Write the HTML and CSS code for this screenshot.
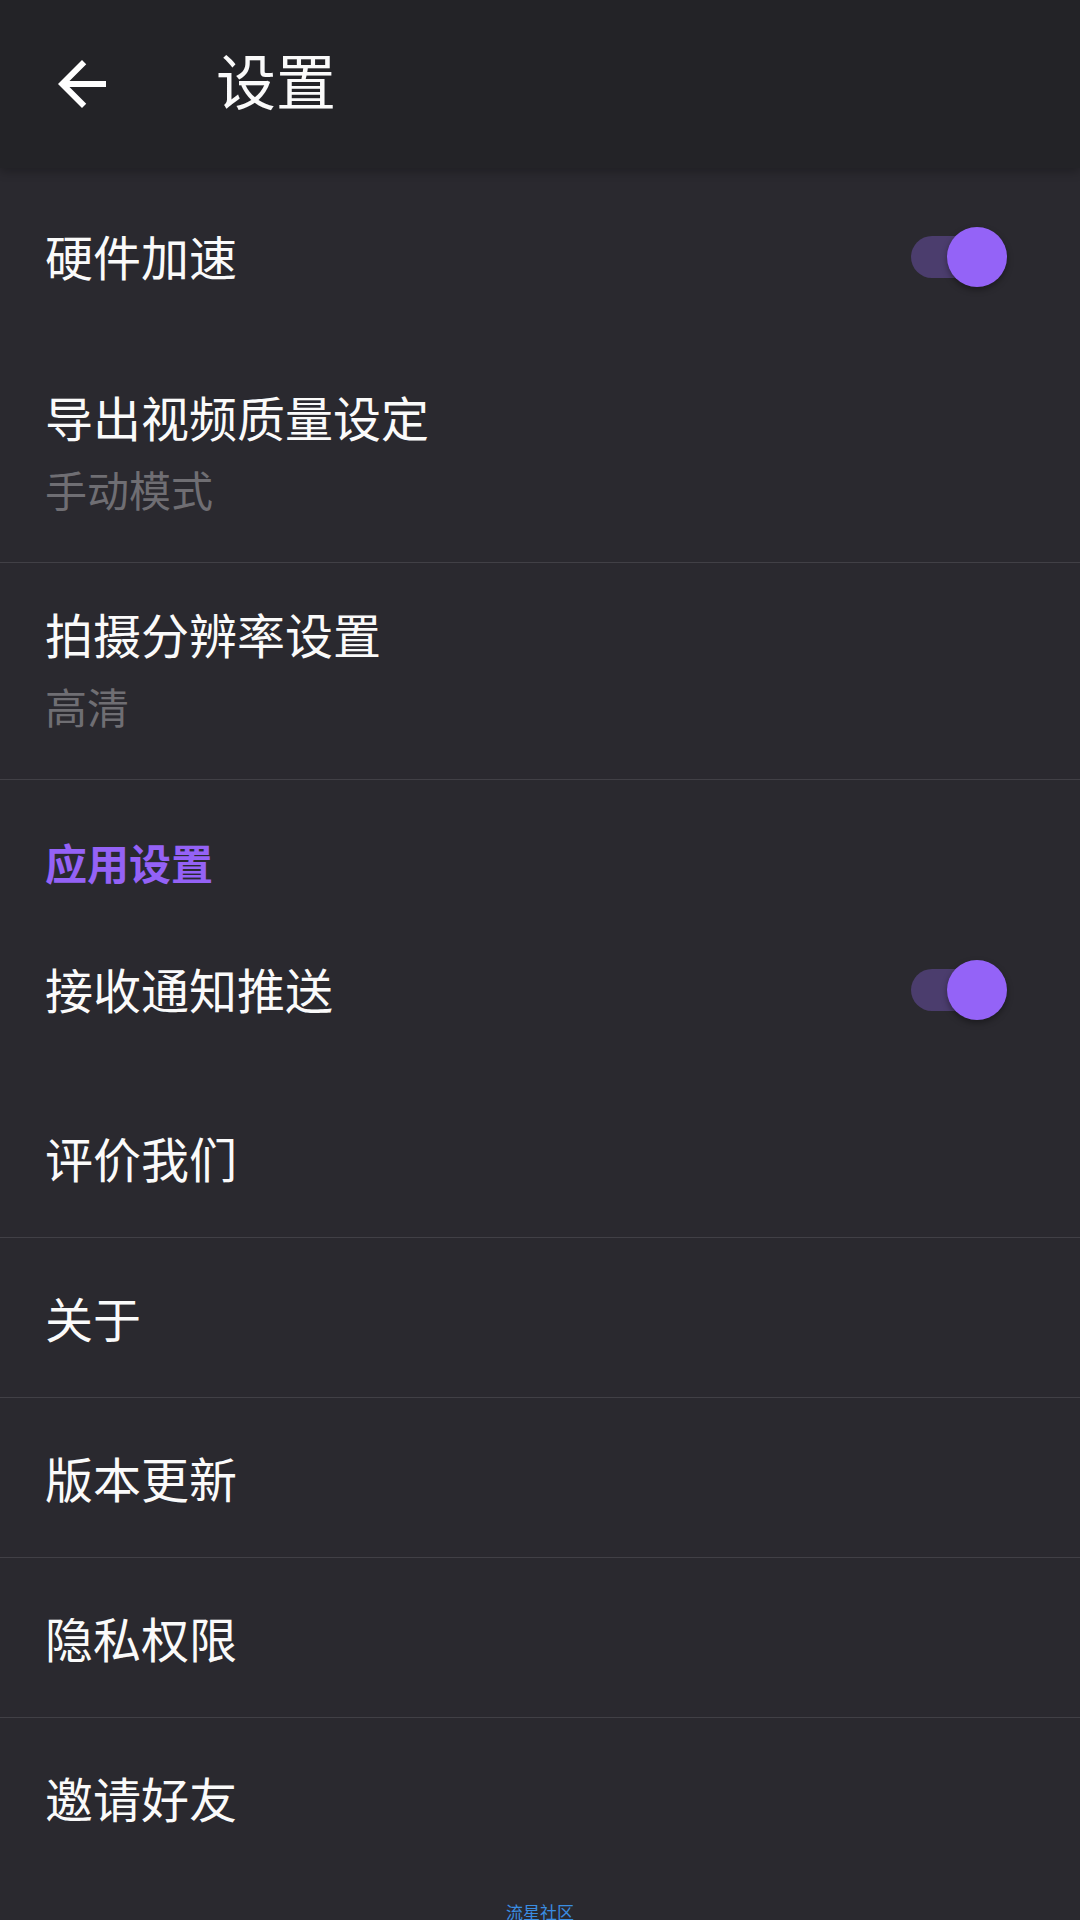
FILE: index.html
```html
<!DOCTYPE html>
<html lang="zh-CN">
<head>
    <meta charset="UTF-8">
    <meta name="viewport" content="width=device-width, initial-scale=1.0">
    <title>设置</title>
    <link rel="stylesheet" href="styles.css">
</head>
<body>

    <!-- Toolbar -->
    <header class="toolbar">
        <svg class="back-icon" viewBox="0 0 24 24" width="72" height="72">
            <path fill="#ffffff" d="M20 11H7.83l5.59-5.59L12 4l-8 8 8 8 1.41-1.41L7.83 13H20v-2z"/>
        </svg>
        <h1 class="toolbar-title">设置</h1>
    </header>

    <!-- Settings list -->
    <main class="settings">
        <div class="row row-switch">
            <span class="row-title">硬件加速</span>
            <div class="switch"><span class="switch-track"></span><span class="switch-thumb"></span></div>
        </div>

        <div class="row row-two divided">
            <span class="row-title">导出视频质量设定</span>
            <span class="row-sub">手动模式</span>
        </div>

        <div class="row row-two divided">
            <span class="row-title">拍摄分辨率设置</span>
            <span class="row-sub">高清</span>
        </div>

        <div class="section-title">应用设置</div>

        <div class="row row-switch">
            <span class="row-title">接收通知推送</span>
            <div class="switch"><span class="switch-track"></span><span class="switch-thumb"></span></div>
        </div>

        <div class="row row-single divided">
            <span class="row-title">评价我们</span>
        </div>
        <div class="row row-single divided">
            <span class="row-title">关于</span>
        </div>
        <div class="row row-single divided">
            <span class="row-title">版本更新</span>
        </div>
        <div class="row row-single divided">
            <span class="row-title">隐私权限</span>
        </div>
        <div class="row row-single">
            <span class="row-title">邀请好友</span>
        </div>
    </main>

    <div class="watermark">流星社区</div>

</body>
</html>
```

FILE: styles.css
```css
/* General Reset */
* {
    margin: 0;
    padding: 0;
    box-sizing: border-box;
}

body {
    font-family: 'Noto Sans CJK SC', 'Noto Sans', sans-serif;
    background-color: #2a292f;
    color: #fafafa;
    width: 1080px;
    height: 1920px;
    overflow: hidden;
    position: relative;
}

/* Toolbar */
.toolbar {
    height: 168px;
    background-color: #232327;
    display: flex;
    align-items: flex-start;
    padding: 48px 0 0 46px;
    gap: 98px;
    box-shadow: 0 3px 10px rgba(0, 0, 0, 0.28);
    position: relative;
    z-index: 1;
}

.back-icon {
    display: block;
    flex-shrink: 0;
}

.toolbar-title {
    font-size: 60px;
    font-weight: 400;
    line-height: 72px;
    margin-top: -5px;
}

/* Rows */
.row {
    padding: 0 73px 0 45px;
}

.divided {
    border-bottom: 1px solid #414046;
}

.row-title {
    font-size: 48px;
    line-height: 56px;
}

.row-switch {
    height: 178px;
    display: flex;
    align-items: center;
    justify-content: space-between;
}

.row-switch .row-title {
    margin-top: -5px;
}

.settings .section-title + .row-switch {
    height: 176px;
}

.row-single {
    height: 160px;
    display: flex;
    align-items: center;
    padding-bottom: 2px;
}

.row-two {
    height: 217px;
    display: flex;
    flex-direction: column;
    padding-top: 42px;
}

.row-sub {
    font-size: 42px;
    line-height: 50px;
    color: #6f6e73;
    margin-top: 20px;
}

/* Section header */
.section-title {
    height: 122px;
    padding: 56px 0 0 45px;
    font-size: 42px;
    line-height: 52px;
    font-weight: 700;
    color: #9462f6;
}

/* Switch */
.switch {
    position: relative;
    width: 96px;
    height: 60px;
    flex-shrink: 0;
}

.switch-track {
    position: absolute;
    left: 0;
    top: 9px;
    width: 93px;
    height: 42px;
    border-radius: 21px;
    background-color: #4b3d6d;
}

.switch-thumb {
    position: absolute;
    right: 0;
    top: 0;
    width: 60px;
    height: 60px;
    border-radius: 50%;
    background-color: #9463f7;
    box-shadow: 0 3px 6px rgba(0, 0, 0, 0.35);
}

/* Watermark */
.watermark {
    position: absolute;
    left: 0;
    right: 0;
    top: 1902px;
    text-align: center;
    font-size: 17px;
    line-height: 20px;
    color: #3a8de2;
}
```
